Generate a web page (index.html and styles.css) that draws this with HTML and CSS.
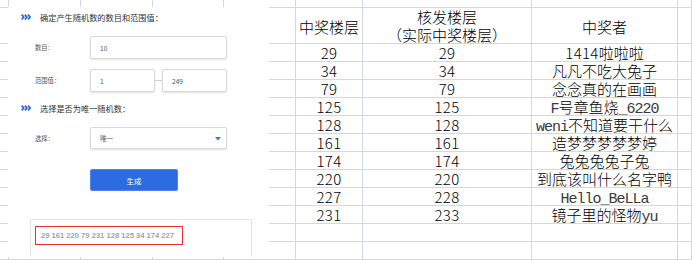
FILE: index.html
```html
<!DOCTYPE html>
<html lang="zh-CN">
<head>
<meta charset="utf-8">
<title>中奖楼层</title>
<link rel="stylesheet" href="styles.css">
</head>
<body>
<div class="page">
  <div class="sheet">
    <div class="c"></div><div class="c"></div><div class="c"></div><div class="c"></div><div class="c"></div><div class="c"></div><div class="c"></div><div class="c"></div><div class="c"></div>

    <div class="c"></div><div class="c"></div><div class="c"></div><div class="c"></div><div class="c"></div>
    <div class="c h"><span>中奖楼层</span></div>
    <div class="c h two"><span>核发楼层</span><span>（实际中奖楼层）</span></div>
    <div class="c h"><span>中奖者</span></div>
    <div class="c"></div>

    <div class="c"></div><div class="c"></div><div class="c"></div><div class="c"></div><div class="c"></div>
    <div class="c d n">29</div><div class="c d n">29</div><div class="c d"><span class="num">1414</span>啦啦啦</div><div class="c"></div>

    <div class="c"></div><div class="c"></div><div class="c"></div><div class="c"></div><div class="c"></div>
    <div class="c d n">34</div><div class="c d n">34</div><div class="c d">凡凡不吃大兔子</div><div class="c"></div>

    <div class="c"></div><div class="c"></div><div class="c"></div><div class="c"></div><div class="c"></div>
    <div class="c d n">79</div><div class="c d n">79</div><div class="c d">念念真的在画画</div><div class="c"></div>

    <div class="c"></div><div class="c"></div><div class="c"></div><div class="c"></div><div class="c"></div>
    <div class="c d n">125</div><div class="c d n">125</div><div class="c d"><span class="lat">F</span>号章鱼烧<span class="lat">_6220</span></div><div class="c"></div>

    <div class="c"></div><div class="c"></div><div class="c"></div><div class="c"></div><div class="c"></div>
    <div class="c d n">128</div><div class="c d n">128</div><div class="c d"><span class="lat">weni</span>不知道要干什么</div><div class="c"></div>

    <div class="c"></div><div class="c"></div><div class="c"></div><div class="c"></div><div class="c"></div>
    <div class="c d n">161</div><div class="c d n">161</div><div class="c d">造梦梦梦梦梦婷</div><div class="c"></div>

    <div class="c"></div><div class="c"></div><div class="c"></div><div class="c"></div><div class="c"></div>
    <div class="c d n">174</div><div class="c d n">174</div><div class="c d">兔兔兔兔子兔</div><div class="c"></div>

    <div class="c"></div><div class="c"></div><div class="c"></div><div class="c"></div><div class="c"></div>
    <div class="c d n">220</div><div class="c d n">220</div><div class="c d">到底该叫什么名字鸭</div><div class="c"></div>

    <div class="c"></div><div class="c"></div><div class="c"></div><div class="c"></div><div class="c"></div>
    <div class="c d n">227</div><div class="c d n">228</div><div class="c d"><span class="lat">Hello_BeLLa</span></div><div class="c"></div>

    <div class="c"></div><div class="c"></div><div class="c"></div><div class="c"></div><div class="c"></div>
    <div class="c d n">231</div><div class="c d n">233</div><div class="c d">镜子里的怪物<span class="lat">yu</span></div><div class="c"></div>

    <div class="c"></div><div class="c"></div><div class="c"></div><div class="c"></div><div class="c"></div><div class="c"></div><div class="c"></div><div class="c"></div><div class="c"></div>

    <div class="c"></div><div class="c"></div><div class="c"></div><div class="c"></div><div class="c"></div><div class="c"></div><div class="c"></div><div class="c"></div><div class="c"></div>
  </div>

  <div class="shot">
    <div class="sec">
      <svg class="chev" viewBox="0 0 10 6" width="10" height="6"><path d="M0.7 0.6 L2.7 3 L0.7 5.4 M3.9 0.6 L5.9 3 L3.9 5.4 M7.1 0.6 L9.1 3 L7.1 5.4" fill="none" stroke="#2b62d9" stroke-width="1.7"/></svg>
      <span>确定产生随机数的数目和范围值：</span>
    </div>
    <div class="row r1">
      <span class="lbl">数目：</span>
      <div class="inp wide">10</div>
    </div>
    <div class="row r2">
      <span class="lbl">范围值：</span>
      <div class="inp half">1</div>
      <span class="dash"></span>
      <div class="inp half">249</div>
    </div>
    <div class="sec s2">
      <svg class="chev" viewBox="0 0 10 6" width="10" height="6"><path d="M0.7 0.6 L2.7 3 L0.7 5.4 M3.9 0.6 L5.9 3 L3.9 5.4 M7.1 0.6 L9.1 3 L7.1 5.4" fill="none" stroke="#2b62d9" stroke-width="1.7"/></svg>
      <span>选择是否为唯一随机数：</span>
    </div>
    <div class="row r3">
      <span class="lbl">选择：</span>
      <div class="inp wide sel"><span>唯一</span><svg class="tri" viewBox="0 0 6 4" width="6" height="4"><path d="M0 0 H6 L3 3.5 Z" fill="#3a78dc"/></svg></div>
    </div>
    <div class="btn">生成</div>
    <div class="out">
      <div class="res">29 161 220 79 231 128 125 34 174 227</div>
    </div>
  </div>
</div>
</body>
</html>
```

FILE: styles.css
```css
html, body {
  margin: 0;
  padding: 0;
  background: #ffffff;
}

.page {
  position: relative;
  width: 692px;
  height: 260px;
  overflow: hidden;
}

/* spreadsheet */
.sheet {
  display: grid;
  grid-template-columns: 9px 72px 72px 71px 72px 67px 169px 146px 1fr;
  grid-template-rows: 8px 36px repeat(12, 18px);
  width: 692px;
  font-family: "Noto Sans CJK SC", "Liberation Sans", sans-serif;
  font-size: 15px;
  font-weight: 300;
  color: #000;
}

.c {
  box-sizing: border-box;
  border-right: 1px solid #d0d7e5;
  border-bottom: 1px solid #d0d7e5;
  white-space: nowrap;
  overflow: visible;
}

.h {
  display: flex;
  flex-direction: column;
  align-items: center;
  justify-content: center;
  line-height: 18px;
  padding-top: 2px;
}

.two {
  padding-top: 1px;
}

.d {
  text-align: center;
  line-height: 17px;
}

.n, .num {
  font-variant-numeric: tabular-nums;
  letter-spacing: 0.3px;
}

.lat {
  font-family: "Liberation Mono", "DejaVu Sans Mono", monospace;
  font-weight: 400;
  letter-spacing: -1px;
  color: #3a3a3a;
}

/* pasted form screenshot */
.shot {
  position: absolute;
  left: 8px;
  top: 7px;
  width: 261px;
  height: 250px;
  background: #ffffff;
  overflow: hidden;
  font-family: "Noto Sans CJK SC", "Liberation Sans", sans-serif;
}

.sec {
  display: flex;
  align-items: center;
  height: 12px;
  margin-top: 4px;
  padding-left: 13px;
  font-size: 8.2px;
  color: #333;
  gap: 9px;
}

.s2 {
  margin-top: 10px;
}

.chev {
  display: block;
}

.row {
  display: flex;
  align-items: center;
  padding-left: 27px;
}

.r1 { margin-top: 13px; }
.r2 { margin-top: 10px; }
.r3 { margin-top: 13px; }

.lbl {
  width: 55px;
  font-size: 6.3px;
  color: #555;
}

.inp {
  box-sizing: border-box;
  height: 23px;
  border: 1px solid #dadada;
  border-radius: 2px;
  box-shadow: 0 1px 2px rgba(0, 0, 0, 0.13);
  background: #fff;
  display: flex;
  align-items: center;
  padding-left: 9px;
  font-size: 6.6px;
  color: #555;
}

.wide { width: 137px; }
.half { width: 65px; }

.sel {
  height: 22px;
  padding-right: 5px;
  justify-content: space-between;
}

.tri {
  display: block;
  margin-top: 1px;
}

.dash {
  width: 7px;
  height: 1px;
  background: #cfcfcf;
}

.btn {
  box-sizing: border-box;
  margin: 20px 0 0 82px;
  width: 88px;
  height: 22px;
  background: #2d6be3;
  border: 1px solid #4f86ee;
  border-radius: 2px;
  color: #fff;
  font-size: 7.4px;
  display: flex;
  align-items: center;
  justify-content: center;
}

.out {
  box-sizing: border-box;
  margin: 28px 0 0 22px;
  width: 222px;
  height: 40px;
  border: 1px solid #e4e4e4;
  border-bottom: none;
  padding: 6px 0 0 4px;
}

.res {
  box-sizing: border-box;
  width: 148px;
  height: 19px;
  border: 1px solid #e8312e;
  padding-left: 5px;
  font-family: "Liberation Sans", Arial, sans-serif;
  font-size: 7.6px;
  font-weight: 700;
  line-height: 17px;
  color: #a3a3a3;
  white-space: nowrap;
}
```
